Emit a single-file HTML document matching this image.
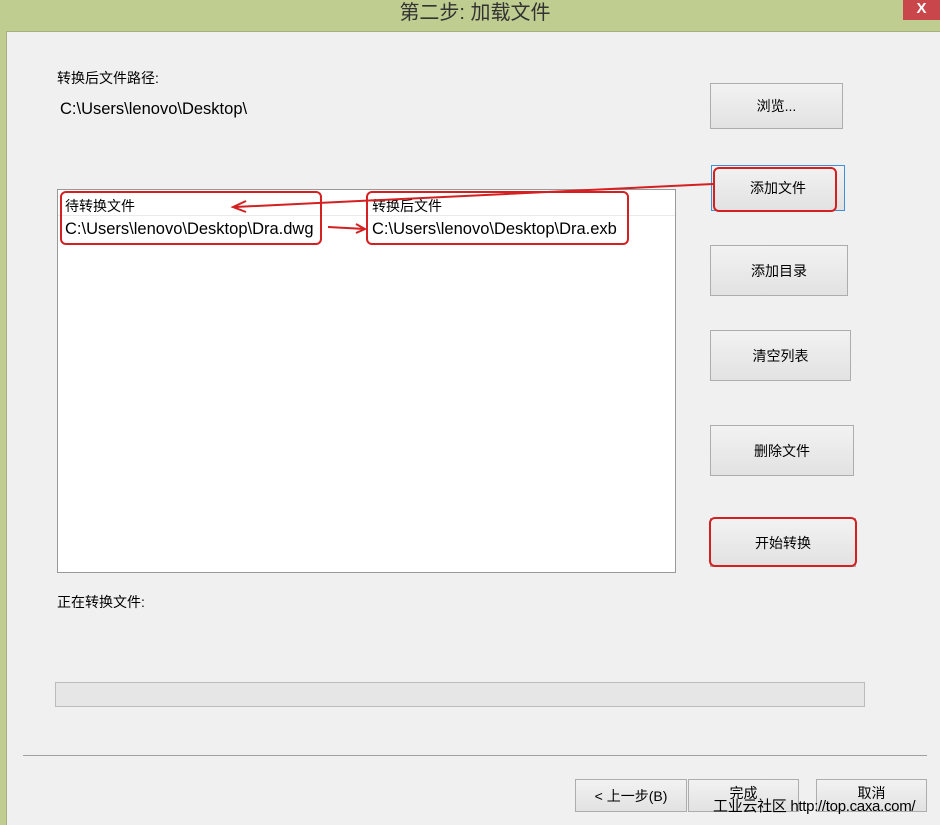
<html><head><style>
body{margin:0;width:940px;height:824px;background:#bfcd90;font-family:"Liberation Sans","Noto Sans CJK SC",sans-serif;position:relative;overflow:hidden;font-size:14px;color:#000}
.a{position:absolute}
.main{left:6px;top:31px;width:934px;height:793px;background:#f0f0f0;border-top:1px solid #a8b080;border-left:1px solid #a8b080}
.btn{position:absolute;background:linear-gradient(#f2f2f2,#e2e2e2);border:1px solid #adadad;display:flex;align-items:center;justify-content:center;font-size:14px;box-sizing:border-box}
.red{position:absolute;border:2px solid #d42020;border-radius:6px;box-sizing:border-box}
</style></head><body>
<div class="a" style="left:0;top:0;width:950px;height:30px;text-align:center;font-size:20px;line-height:26px;color:#333">第二步: 加载文件</div>
<div class="a" style="left:903px;top:0;width:37px;height:20px;background:#c9474a;color:#fff;font-weight:bold;text-align:center;font-size:15px;line-height:18px">X</div>
<div class="a main"></div>
<div class="a" style="left:57px;top:68px">转换后文件路径:</div>
<div class="a" style="left:60px;top:100px;font-size:16.5px">C:\Users\lenovo\Desktop\</div>
<div class="btn" style="left:710px;top:83px;width:133px;height:46px">浏览...</div>
<div class="btn" style="left:711px;top:165px;width:134px;height:46px;border-color:#3c8fd8">添加文件</div>
<div class="btn" style="left:710px;top:245px;width:138px;height:51px">添加目录</div>
<div class="btn" style="left:710px;top:330px;width:141px;height:51px">清空列表</div>
<div class="btn" style="left:710px;top:425px;width:144px;height:51px">删除文件</div>
<div class="btn" style="left:710px;top:518px;width:146px;height:49px">开始转换</div>
<div class="a" style="left:57px;top:189px;width:619px;height:384px;background:#fff;border:1px solid #999;box-sizing:border-box"></div>
<div class="a" style="left:58px;top:215px;width:617px;height:1px;background:#eaeaea"></div>
<div class="a" style="left:65px;top:196px">待转换文件</div>
<div class="a" style="left:372px;top:196px">转换后文件</div>
<div class="a" style="left:65px;top:220px;font-size:16.5px">C:\Users\lenovo\Desktop\Dra.dwg</div>
<div class="a" style="left:372px;top:220px;font-size:16.5px">C:\Users\lenovo\Desktop\Dra.exb</div>
<div class="red" style="left:60px;top:191px;width:262px;height:54px"></div>
<div class="red" style="left:366px;top:191px;width:263px;height:54px"></div>
<div class="red" style="left:713px;top:167px;width:124px;height:45px"></div>
<div class="red" style="left:709px;top:517px;width:148px;height:50px"></div>
<svg class="a" style="left:0;top:0" width="940" height="824"><g stroke="#d42020" stroke-width="2" fill="none">
<path d="M713 184 L235 207 M246 201 L233 207 L246 212"/>
<path d="M328 227 L365 229 M356 224 L365 229 L356 233"/></g></svg>
<div class="a" style="left:57px;top:592px">正在转换文件:</div>
<div class="a" style="left:55px;top:682px;width:810px;height:25px;background:#e6e6e6;border:1px solid #bcbcbc;box-sizing:border-box"></div>
<div class="a" style="left:23px;top:755px;width:904px;height:1px;background:#a0a0a0"></div>
<div class="btn" style="left:575px;top:779px;width:112px;height:33px">&lt; 上一步(B)</div>
<div class="btn" style="left:688px;top:779px;width:111px;height:33px;padding-bottom:6px">完成</div>
<div class="btn" style="left:816px;top:779px;width:111px;height:33px;padding-bottom:6px">取消</div>
<div class="a" style="left:713px;top:795px;font-size:15px;white-space:nowrap;letter-spacing:-0.3px">工业云社区 http://top.caxa.com/</div>
</body></html>
